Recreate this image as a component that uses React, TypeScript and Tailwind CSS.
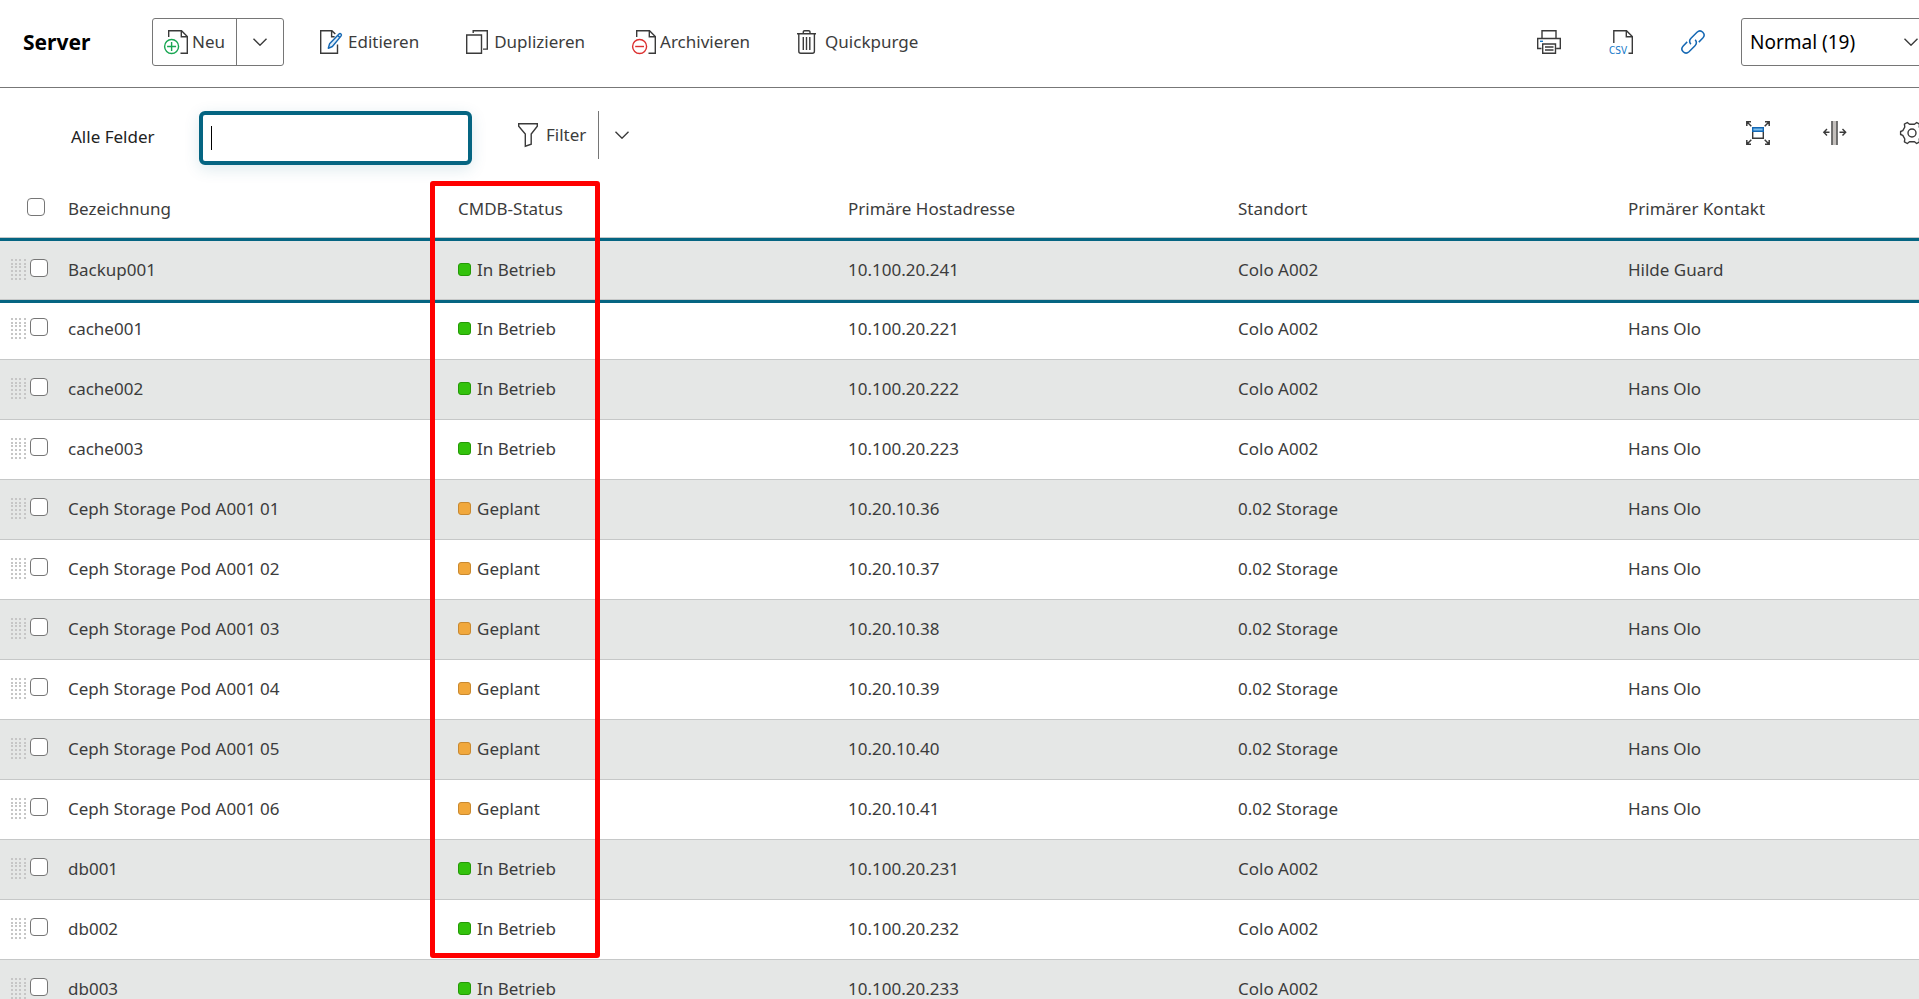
import React from "react";

type Status = "In Betrieb" | "Geplant";

interface ServerRow {
  name: string;
  status: Status;
  host: string;
  location: string;
  contact: string;
}

const rows: ServerRow[] = [
  { name: "Backup001", status: "In Betrieb", host: "10.100.20.241", location: "Colo A002", contact: "Hilde Guard" },
  { name: "cache001", status: "In Betrieb", host: "10.100.20.221", location: "Colo A002", contact: "Hans Olo" },
  { name: "cache002", status: "In Betrieb", host: "10.100.20.222", location: "Colo A002", contact: "Hans Olo" },
  { name: "cache003", status: "In Betrieb", host: "10.100.20.223", location: "Colo A002", contact: "Hans Olo" },
  { name: "Ceph Storage Pod A001 01", status: "Geplant", host: "10.20.10.36", location: "0.02 Storage", contact: "Hans Olo" },
  { name: "Ceph Storage Pod A001 02", status: "Geplant", host: "10.20.10.37", location: "0.02 Storage", contact: "Hans Olo" },
  { name: "Ceph Storage Pod A001 03", status: "Geplant", host: "10.20.10.38", location: "0.02 Storage", contact: "Hans Olo" },
  { name: "Ceph Storage Pod A001 04", status: "Geplant", host: "10.20.10.39", location: "0.02 Storage", contact: "Hans Olo" },
  { name: "Ceph Storage Pod A001 05", status: "Geplant", host: "10.20.10.40", location: "0.02 Storage", contact: "Hans Olo" },
  { name: "Ceph Storage Pod A001 06", status: "Geplant", host: "10.20.10.41", location: "0.02 Storage", contact: "Hans Olo" },
  { name: "db001", status: "In Betrieb", host: "10.100.20.231", location: "Colo A002", contact: "" },
  { name: "db002", status: "In Betrieb", host: "10.100.20.232", location: "Colo A002", contact: "" },
  { name: "db003", status: "In Betrieb", host: "10.100.20.233", location: "Colo A002", contact: "" },
];

const statusColor: Record<Status, string> = {
  "In Betrieb": "border-[#249a06] bg-[#33c20c]",
  Geplant: "border-[#c98930] bg-[#f1a83c]",
};

function Icon({ children }: { children: React.ReactNode }) {
  return (
    <svg
      className="size-6 shrink-0 overflow-visible"
      viewBox="0 0 24 24"
      fill="none"
      stroke="#3a3a3a"
      strokeWidth="1.4"
      aria-hidden="true"
    >
      {children}
    </svg>
  );
}

const NewIcon = () => (
  <Icon>
    <path d="M4.7 7V.7h12.8l5.8 5.8v16.8H16.5M17.3.7v6h6" />
    <g stroke="#17a651">
      <circle cx="7.6" cy="16.5" r="7" />
      <path d="M7.6 12v9M3.1 16.5h9" />
    </g>
  </Icon>
);

const EditIcon = () => (
  <Icon>
    <path d="M17.5 14.5v8.8H.7V.7h11.2l3.4 3.4M11.6.7v6.1h3" />
    <path
      d="M8.3 18.3l1.3-4.6L19 4.1q1-1 2 0t0 2l-8.6 10.4zM17.7 5.6l2 1.9"
      stroke="#1467b3"
      fill="#dcecf9"
      strokeLinejoin="round"
    />
  </Icon>
);

const DuplicateIcon = () => (
  <Icon>
    <path d="M.7 5h14.8v18.3H.7zM7.2 3V.7h14.1v18.4H17" />
  </Icon>
);

const ArchiveIcon = () => (
  <Icon>
    <path d="M4.7 7V.7h12.8l5.8 5.8v16.8H16.5M17.3.7v6h6" />
    <g stroke="#dc2f2f">
      <circle cx="7.6" cy="16.5" r="7" />
      <path d="M3.2 16.5H12" />
    </g>
  </Icon>
);

const TrashIcon = () => (
  <Icon>
    <path d="M0 3.8h19M6.3 3.5V2q0-1.3 1.3-1.3h4Q13 .7 13 2v1.5M1.8 4v17.3q0 2 2 2h11.6q2 0 2-2V4M6.3 7v13M9.5 7v13M12.8 7v13" />
  </Icon>
);

const PrinterIcon = () => (
  <Icon>
    <path d="M5 8.5V.7h14v7.8M4.5 18.5H.7v-10h22.6v10h-4M5.7 14h12.8v9.3H5.7zM8 17h8.5M8 20h8.5" />
    <path d="M3 11.3h3" stroke="#1479c9" />
  </Icon>
);

const CsvIcon = () => (
  <Icon>
    <path d="M4.8 13V.7h12.7l5.8 5.8v16.8H19.5M17.3.7v6h6" />
    <text x="0" y="23.6" fontSize="10" stroke="none" fill="#1479c9" className="font-['DejaVu_Sans_Condensed',sans-serif]">
      CSV
    </text>
  </Icon>
);

const LinkIcon = () => (
  <Icon>
    <g stroke="#1467b3" strokeWidth="1.5">
      <path d="M9.8 14.2Q7.3 11 10 8.3l6-6q3-2.8 5.8 0t0 5.8l-4 4" />
      <path d="M14.2 9.8q2.5 3.2-.2 5.9l-6 6q-3 2.8-5.8 0t0-5.8l4-4" />
    </g>
  </Icon>
);

const FilterIcon = () => (
  <Icon>
    <path d="M.7 .8h18.6v2.4L13.2 11v10.2L7.3 23.2V11L.7 3.2z" />
  </Icon>
);

const FitIcon = () => (
  <Icon>
    <g strokeWidth="1.5">
      <path d="M5 .8H.8V5M.8.8l4.5 4.5M19 .8h4.2V5M23.2.8l-4.5 4.5M5 23.2H.8V19M.8 23.2l4.5-4.5M19 23.2h4.2V19M23.2 23.2l-4.5-4.5" />
    </g>
    <path d="M6.7 6.7h10.6v10.6H6.7z" />
    <path d="M6.7 6.7h10.6v3.6H6.7z" stroke="#1467b3" fill="#7ec0ee" />
  </Icon>
);

const ColumnsIcon = () => (
  <Icon>
    <path d="M9.6 0h3.8v24H9.6z" fill="#c4c0bd" stroke="none" />
    <path d="M9 0v24M14 0v24M6.5 11.3H1M4 8l-3.2 3.3L4 14.6M16.5 11.3h6M19.5 8l3.2 3.3-3.2 3.3" />
  </Icon>
);

const GearIcon = () => (
  <Icon>
    <circle cx="12" cy="12" r="4" />
    <path
      strokeLinejoin="round"
      d="M7.300 1.500L9.500 3.300H14.500L16.700 1.500L19.600 3.200L19.200 6L21.200 9.600L23.400 10.500V13.500L21.200 14.400L19.200 18L19.600 20.800L16.700 22.500L14.500 20.700H9.500L7.300 22.500L4.400 20.800L4.800 18L2.800 14.400L.6 13.500V10.500L2.800 9.600L4.800 6L4.400 3.200z"
    />
  </Icon>
);

const Chevron = () => (
  <svg className="h-2 w-3.5 shrink-0" viewBox="0 0 14 8" fill="none" stroke="#3a3a3a" strokeWidth="1.4" aria-hidden="true">
    <path d="M.5.7L7 7.2 13.5.7" />
  </svg>
);

const DragHandle = () => (
  <svg className="h-[21px] w-[15px] shrink-0" viewBox="0 0 15 21" fill="#c6c6c6" aria-hidden="true">
    {[0, 4, 7, 11, 15, 19].map((y) =>
      [0, 4, 8, 13].map((x) => <rect key={`${x}-${y}`} x={x} y={y} width="2" height="2" />),
    )}
  </svg>
);

function ToolButton({ icon, label }: { icon: React.ReactNode; label: string }) {
  return (
    <button type="button" className="flex h-12 items-center gap-1">
      {icon}
      {label}
    </button>
  );
}

function IconButton({ icon, label }: { icon: React.ReactNode; label: string }) {
  return (
    <button type="button" aria-label={label} className="flex size-6 items-center justify-center">
      {icon}
    </button>
  );
}

function CheckBox({ label }: { label: string }) {
  return (
    <input
      type="checkbox"
      aria-label={label}
      className="size-[18px] shrink-0 appearance-none rounded border border-[#767676] bg-white checked:bg-[#056582]"
    />
  );
}

export default function App() {
  return (
    <div className="h-screen overflow-hidden bg-white font-['Noto_Sans',sans-serif] text-[17px] leading-6 text-[#3c3c3c]">
      <div className="w-[calc(100%+21px)]">
        <header className="flex h-[88px] items-center border-b border-[#777777] pb-1">
          <h1 className="w-[152px] pl-[23px] text-[21px] font-bold text-black">Server</h1>
          <div className="flex h-12 rounded-[3px] border border-[#767676]">
            <button type="button" className="flex w-[84px] items-center gap-1 border-r border-[#767676] pl-[11px]">
              <NewIcon />
              Neu
            </button>
            <button type="button" aria-label="Weitere Optionen" className="flex w-[46px] items-center justify-center">
              <Chevron />
            </button>
          </div>
          <nav className="ml-9 flex gap-[47px]">
            <ToolButton icon={<EditIcon />} label="Editieren" />
            <ToolButton icon={<DuplicateIcon />} label="Duplizieren" />
            <ToolButton icon={<ArchiveIcon />} label="Archivieren" />
            <ToolButton icon={<TrashIcon />} label="Quickpurge" />
          </nav>
          <div className="ml-auto flex items-center gap-12">
            <IconButton icon={<PrinterIcon />} label="Drucken" />
            <IconButton icon={<CsvIcon />} label="CSV-Export" />
            <IconButton icon={<LinkIcon />} label="Link" />
          </div>
          <div className="relative ml-9 flex w-[199px] items-center">
            <select
              aria-label="Ansicht"
              className="h-12 w-full appearance-none rounded-[3px] border border-[#767676] bg-white pl-2 text-[19px] text-black"
            >
              <option>Normal (19)</option>
            </select>
            <span className="pointer-events-none absolute right-[22px]">
              <Chevron />
            </span>
          </div>
        </header>

        <div className="flex h-[90px] items-start pt-[23px]">
          <label htmlFor="search" className="w-[199px] pt-3.5 pl-[71px] text-[#222222]">
            Alle Felder
          </label>
          <div className="relative">
            <input
              id="search"
              type="text"
              className="h-[54px] w-[273px] rounded-md border-4 border-[#056582] px-2 caret-transparent shadow-[0_4px_16px_rgba(5,101,130,0.14)] outline-none"
            />
            <span className="absolute top-[15px] left-3 h-6 w-px bg-black" />
          </div>
          <button type="button" className="ml-[46px] flex h-12 items-center gap-1 pr-3">
            <FilterIcon />
            Filter
          </button>
          <button type="button" aria-label="Filteroptionen" className="flex h-12 items-center border-l border-[#767676] pl-4">
            <Chevron />
          </button>
          <div className="mt-2.5 mr-4 ml-auto flex gap-[53px]">
            <IconButton icon={<FitIcon />} label="Einpassen" />
            <IconButton icon={<ColumnsIcon />} label="Spaltenbreite" />
            <IconButton icon={<GearIcon />} label="Einstellungen" />
          </div>
        </div>

        <div className="relative">
          <table className="w-full table-fixed border-separate border-spacing-0 text-left">
            <colgroup>
              <col className="w-[52px]" />
              <col className="w-[390px]" />
              <col className="w-[390px]" />
              <col className="w-[390px]" />
              <col className="w-[390px]" />
              <col />
            </colgroup>
            <thead>
              <tr className="h-[60px]">
                <th className="border-b border-[#c6c8c8] pb-0.5 pl-[27px]">
                  <div className="flex">
                    <CheckBox label="Alle auswählen" />
                  </div>
                </th>
                {["Bezeichnung", "CMDB-Status", "Primäre Hostadresse", "Standort", "Primärer Kontakt"].map((title) => (
                  <th key={title} className="border-b border-[#c6c8c8] pt-0.5 pl-4 font-normal">
                    {title}
                  </th>
                ))}
              </tr>
            </thead>
            <tbody className="[&_td]:border-b [&_td]:border-[#c6c8c8]">
              {rows.map((row, i) => (
                <tr
                  key={row.name}
                  className={
                    i === 0
                      ? "h-[62px] bg-[#e5e7e6] [&_td]:pt-0.5 [&_td]:shadow-[inset_0_3px_0_#056582]"
                      : i === 1
                        ? "h-[60px] bg-white [&_td]:pb-0.5 [&_td]:shadow-[inset_0_3px_0_#056582]"
                        : "h-[60px] even:bg-white odd:bg-[#e5e7e6] [&_td]:pb-0.5"
                  }
                >
                  <td className="pl-[11px]">
                    <div className="flex items-start gap-1">
                      <DragHandle />
                      <CheckBox label={`${row.name} auswählen`} />
                    </div>
                  </td>
                  <td className="pl-4">{row.name}</td>
                  <td className="pl-4">
                    <div className="flex items-center gap-1.5">
                      <span className={`size-[13px] rounded-[3px] border ${statusColor[row.status]}`} />
                      {row.status}
                    </div>
                  </td>
                  <td className="pl-4">{row.host}</td>
                  <td className="pl-4">{row.location}</td>
                  <td className="pl-4">{row.contact}</td>
                </tr>
              ))}
            </tbody>
          </table>
          <div className="pointer-events-none absolute top-[3px] left-[430px] h-[777px] w-[170px] rounded-[3px] border-[5px] border-[#ff0000]" />
        </div>
      </div>
    </div>
  );
}
